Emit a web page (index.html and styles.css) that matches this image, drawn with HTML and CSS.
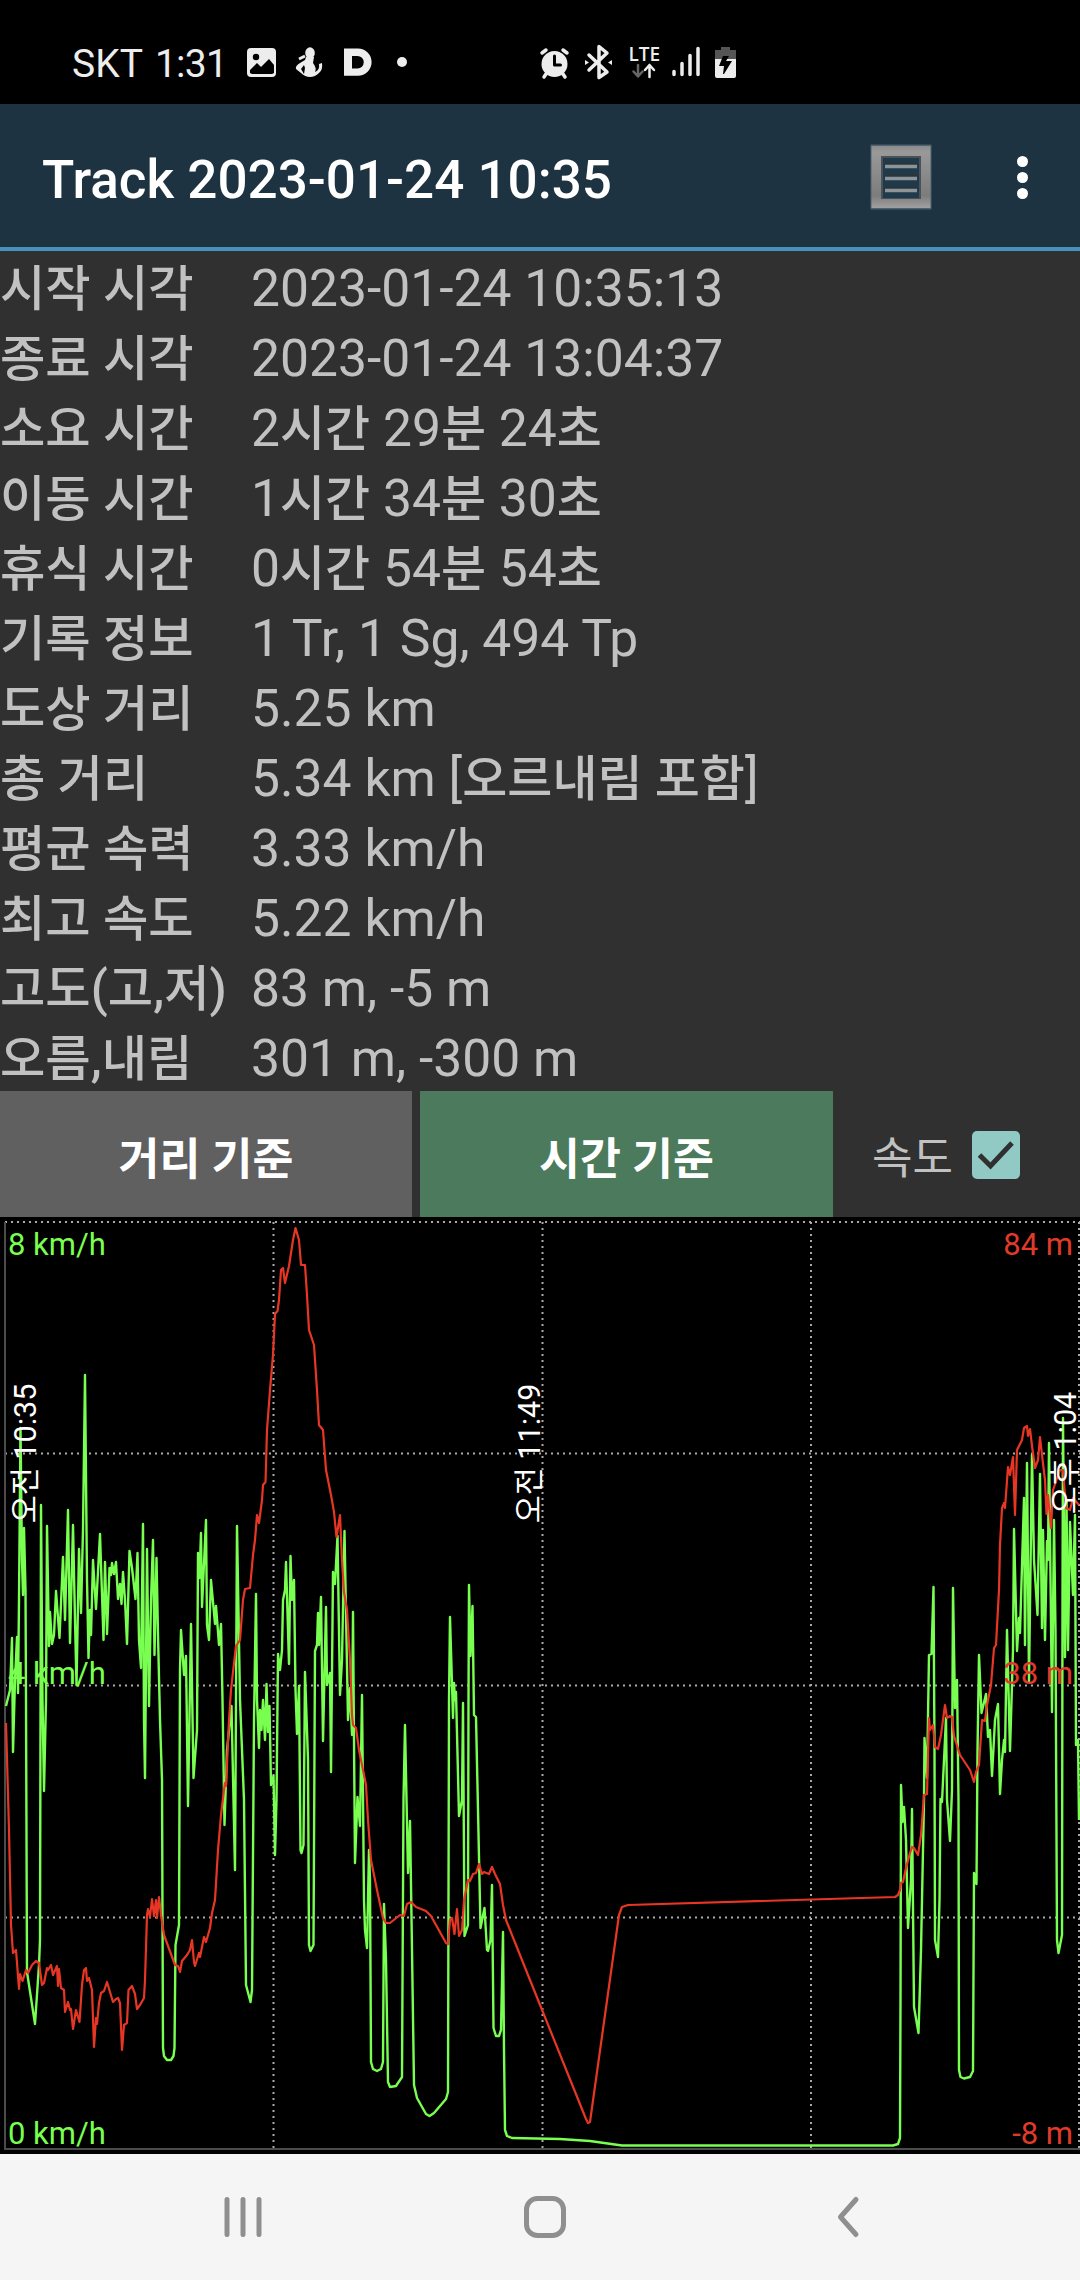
FILE: index.html
```html
<!DOCTYPE html>
<html lang="ko">
<head>
    <meta charset="UTF-8">
    <meta name="viewport" content="width=device-width, initial-scale=1.0">
    <title>Track 2023-01-24 10:35</title>
    <link rel="stylesheet" href="styles.css">
</head>
<body>
    <div class="status">
        <span class="carrier">SKT</span>
        <span class="clock">1:31</span>
        <!-- 알림 아이콘 -->
        <svg class="noti" width="170" height="40" viewBox="240 44 170 40">
            <rect x="247" y="49" width="29" height="29" rx="4"/>
            <circle class="cut" cx="256" cy="58" r="3.2"/>
            <path class="cut" d="M250 71l7-7 4 4 8-8 5 6v8l-2 1h-20l-2-1z"/>
            <ellipse cx="310" cy="54" rx="4.8" ry="5.8"/>
            <path d="M306 58h8l-1 6q4 5 2 9 5-2 4-8l3-1q1 7-3 10-4 4-9 4-5 0-9-4l-5-4q-1-3 4-6l5-3z"/>
            <path class="cut" d="M301 70l3-4 1 3-1 6z"/>
            <path class="arm" d="M299 60l6-3"/>
            <path fill-rule="evenodd" d="M344 49.500h14a13.600 13.600 0 0 1 0 27.200h-14zM352 57v12.500h5.500a6.200 6.200 0 0 0 0-12.500z"/>
            <circle cx="402" cy="63" r="5"/>
        </svg>
        <svg class="system" width="210" height="40" viewBox="535 44 210 40">
            <!-- 알람 -->
            <circle cx="554.500" cy="65" r="13"/>
            <path class="line w4" d="M542 54l4-3M563 51l4 3M546 75l-2 3M563 75l2 3"/>
            <path class="line dark" d="M554.500 57v9h6"/>
            <!-- 블루투스 -->
            <path class="line w4" d="M589 56l18 17-8 5.500v-31l8 6.500-18 17"/>
            <path d="M585 61l4 2.500-4 2.500zM612 61l-4 2.500 4 2.500z"/>
            <!-- LTE -->
            <text class="lte" x="628.500" y="62">LTE</text>
            <path class="line w25 dim" d="M638 66v11M633.500 72.500l4.500 5 4.500-5"/>
            <path class="line w25" d="M649.500 78v-12M645 71l4.500-5 4.500 5"/>
            <!-- 신호 -->
            <path class="line w4" d="M674 72.500v3M682 64.500v11M690 56.500v19M698 49.500v26"/>
            <!-- 배터리 -->
            <path class="gray" d="M721 48h9v3h6v10h-21V51h6z"/>
            <path d="M715 60h21v17q0 2-2 2h-17q-2 0-2-2z"/>
            <path class="cut" d="M723 57l6 0-3 5h6l-8 13-1 0 1-8h-5z"/>
        </svg>
    </div>

    <div class="appbar">
        <h1>Track 2023-01-24 10:35</h1>
        <svg class="list" width="64" height="68" viewBox="869 143 64 68">
            <defs>
                <linearGradient id="metal" x1="0" y1="0" x2="0" y2="1">
                    <stop offset="0" stop-color="#8c8c8c"/>
                    <stop offset=".1" stop-color="#999"/>
                    <stop offset=".8" stop-color="#7c7c7c"/>
                    <stop offset="1" stop-color="#a0a0a0"/>
                </linearGradient>
            </defs>
            <rect x="870.500" y="144.500" width="61" height="65" rx="1" fill="#4d626e"/>
            <rect x="871.500" y="146" width="59" height="62" fill="url(#metal)"/>
            <rect x="881" y="156" width="40" height="43" fill="#4a5258"/>
            <rect x="883" y="158" width="36" height="40" fill="#1e3a4b"/>
            <path d="M885 163.500h32M885 175.500h32M885 187.500h32" stroke="#2c3438" stroke-width="2"/>
            <path d="M885 166.500h32M885 178.500h32M885 190.500h32" stroke="#8c9498" stroke-width="3.500"/>
        </svg>
        <div class="more"><i></i><i></i><i></i></div>
    </div>

    <dl class="info">
        <dt>시작 시각</dt><dd>2023-01-24 10:35:13</dd>
        <dt>종료 시각</dt><dd>2023-01-24 13:04:37</dd>
        <dt>소요 시간</dt><dd>2<b>시간</b> 29<b>분</b> 24<b>초</b></dd>
        <dt>이동 시간</dt><dd>1<b>시간</b> 34<b>분</b> 30<b>초</b></dd>
        <dt>휴식 시간</dt><dd>0<b>시간</b> 54<b>분</b> 54<b>초</b></dd>
        <dt>기록 정보</dt><dd>1 Tr, 1 Sg, 494 Tp</dd>
        <dt>도상 거리</dt><dd>5.25 km</dd>
        <dt>총 거리</dt><dd>5.34 km [<b>오르내림 포함</b>]</dd>
        <dt>평균 속력</dt><dd>3.33 km/h</dd>
        <dt>최고 속도</dt><dd>5.22 km/h</dd>
        <dt>고도(고,저)</dt><dd>83 m, -5 m</dd>
        <dt>오름,내림</dt><dd>301 m, -300 m</dd>
    </dl>

    <div class="tabs">
        <button type="button">거리 기준</button>
        <button type="button" class="on">시간 기준</button>
        <label class="speed">속도
            <svg width="48" height="48" viewBox="0 0 48 48">
                <rect width="48" height="48" rx="5"/>
                <path d="M7.500 24l11 11L40 12"/>
            </svg>
        </label>
    </div>

    <svg class="chart" width="1080" height="937" viewBox="0 1217 1080 937">
        <g class="grid">
            <path d="M5 1222H1080M5 1453.500H1080M5 1685.500H1080M5 1917.500H1080"/>
            <path d="M273.500 1222V2149M542.500 1222V2149M811 1222V2149M1079 1222V2149"/>
        </g>
        <path class="axis" d="M5 1222V2149H1080"/>

        <g class="kmh">
            <text x="8" y="1254.500">8 km/h</text>
            <text x="8" y="1683.500">4 km/h</text>
            <text x="8" y="2143.500">0 km/h</text>
        </g>

        <polyline class="speed-line" points="6,1706 10,1690 12,1638 13,1752 15,1680 17,1637 18,1693 19,1600 20.500,1428 22,1560 23,1595 24,1528 25.500,1590 26,1700 27,1972 35,2024 39,1965 40,1940 41,1505 42.500,1700 44,1791 46,1700 47,1526 49,1646 50,1612 52,1644 54,1635 56,1591 59.500,1638 63,1557 65,1620 68,1510 70,1643 73,1525 75,1620 76.500,1685 79,1549 81,1613 83,1530 85,1375 87,1580 88.500,1658 90,1610 91,1635 93,1560 96,1609 100,1534 103.500,1640 105,1562 107,1634 109.500,1568 111,1575 112,1563 114,1574 116,1562 118,1599 120,1584 121.500,1604 123,1572 125,1600 127,1644 129.500,1551 132,1568 135.500,1599 137.500,1553 139,1640 141,1668 143,1524 144,1720 145,1778 147,1549 149,1706 151,1600 153,1540 154.500,1655 156.500,1558 158,1635 160,1720 162,1780 163,2048 164,2056 167,2060 171,2060 173.500,2056 174.500,2048 175.500,1945 179,1925 180,1670 181,1630 184,1675 186,1656 188,1806 191,1624 193.500,1778 197,1730 198,1553 199.500,1578 201,1533 202,1607 206,1520 207,1625 209,1640 211,1580 215,1624 216,1606 219,1645 221,1624 222.500,1700 224.500,1825 227,1750 231.500,1706 235,1870 237,1526 240,1700 244,1800 246,1985 250.500,2002 252,1990 254,1720 256,1594 257,1700 259,1748 260,1710 261.500,1730 263,1700 265,1740 266.500,1684 268,1732 269.500,1706 271,1785 273.500,1776 275,1855 276.500,1800 278,1654 280,1670 282,1650 283,1600 285,1590 286,1562 289,1664 290.500,1556 292,1600 294,1580 295.500,1690 297,1734 299,1686 300.500,1850 301.500,1853 303.500,1845 305,1672 308,1760 309,1945 310.500,1951 313.500,1945 315,1651 317,1645 318,1613 319,1645 321,1597 323,1741 326,1607 327,1685 330,1673 331,1772 333,1572 335,1584 337.500,1536 340,1695 342,1660 344.500,1531 346.500,1640 348,1720 350,1688 352,1735 353,1612 354,1740 355,1863 357.500,1797 360,1826 362,1695 364,1900 365,1930 367,1948 369,1850 370,1880 371,2062 373,2069 377,2071 381,2069 383,2062 384,1904 386,1960 388,2082 390,2087 396,2086 402,2077 403.500,1800 405,1725 408,1873 410,1821 412,1950 414,2085 417,2098 426,2114 429.500,2116 434,2113 446,2099 448,2092 449,1700 450,1617 453,1718 454,1683 455,1700 456,1692 459,1816 462,1800 463,1703 464.500,1936 468,1925 468.500,1700 469,1585 470.500,1656 472.500,1606 474,1715 476,1717 478,1810 480.500,1928 484.500,1908 487,1950 488,1951 490.500,1940 492,1885 493.500,2028 496,2036 499,2036 501,2030 503,1932 504,2050 505,2130 507,2136 512,2138 560,2139 590,2141 622,2145.500 893,2145.500 898,2144 900,2138 900.500,2000 901,1785 902.500,1822 904,1807 906,1840 908,1928 911,1880 912,1809 914,2007 918.500,2033 921,1950 924,1800 924.500,1738 927,1778 929,1655 931.500,1654 933.500,1587 934.500,1750 935,1940 938,1957 939.500,1900 940.500,1799 942,1802 944,1760 946,1718 947,1800 950,1841 952,1790 953,1588 955,1708 957,1680 958.500,1800 959,2070 960.500,2077 964,2078.500 970,2077 973,2071 974,1873 976.500,1884 977.500,1750 979,1655 981.500,1713 986,1694 988,1737 990,1730 992,1776 995,1720 998,1704 1000,1794 1002,1760 1004,1740 1005,1752 1007,1630 1010,1751 1013,1650 1014,1529 1017,1651 1019,1618 1020,1633 1024,1498 1025,1645 1027,1463 1029,1681 1032,1455 1034,1560 1037.500,1615 1040,1474 1042,1628 1043,1530 1045,1640 1047,1541 1048,1560 1049,1443 1052,1712 1054,1520 1055.500,1630 1057,1940 1058.500,1953 1062,1935 1062.500,1600 1063,1418 1065,1657 1066.500,1500 1068,1650 1070,1522 1073,1595 1075,1515 1076,1745 1078,1740 1079,1820"/>

        <polyline class="alt-line" points="6,1723 9,1830 11,1925 13,1953 16,1950 17,1963 19,1989 20,1974 22.500,1981 26,1970 28,1973 32,1965 36,1961 39,1963 42,1985 44,1983 47,1968 48,1970 51,1965 53,1975 57,1966 58,1986 59,1969 61,1988 64,1990 65,2012 68,2002 70,2010 71,2009 73,2029 76,2010 79.500,2022 82,1985 84,1970 86,1968 87,1981 89,1978 92,1990 94,2047 96,2018 97,2024 99,2003 101,1993 104,1991 107,1982 110,1992 113,2002 116,1999 118,1998 120,2003 122,2050 124,2025 127,2023 128.500,1990 132,1986 135,1994 137,2009 140,2005 144,1998 145,1980 147,1915 148,1909 150,1917 152,1899 154,1916 156,1900 157,1918 159,1897 161,1915 164,1935 175,1965 178,1966 180,1972 182,1961 187,1955 190,1950 192,1940 194,1962 195,1966 199,1953 200,1957 204,1937 206,1942 210,1928 212,1913 215,1900 218,1850 221,1815 224,1790 225,1783 226,1786 229,1720 231,1690 233,1672 236,1646 240,1640 243,1600 245,1589 250,1588 253,1555 255,1540 257,1515 259,1523 262,1500 263,1485 265.500,1482 267,1430 270,1390 273,1355 275,1314 277.500,1311 279,1300 281,1270 283,1268 285,1283 289,1266 293,1240 295.500,1228 299,1240 301,1265 305,1265 307,1295 309,1330 314,1345 317,1390 319,1425 323,1430 326,1470 331,1495 334,1512 336.500,1537 340,1515 342,1560 344,1592 347,1610 350,1660 352,1715 353,1725 356,1728 359,1750 362,1765 366,1785 368,1820 371,1860 377,1890 383,1918 386,1923 390,1923 400,1915 404,1916 407,1904 411,1902 416,1907 426,1911 431,1916 446,1943 448,1944 450,1920 452,1918 454.500,1934 457,1909 459,1936 462,1930 464,1900 468,1880 470,1881 473,1874 476,1873 479,1864 482,1874 484,1872 489,1874 492,1867 495,1874 500,1884 503,1905 506,1920 530,1980 586,2119 588,2123 590,2122 619,1915 622,1907 628,1905 895,1897 898,1895 900,1890 901,1883 903,1882 906,1868 910,1853 912,1847 914,1848 918,1855 921,1835 924,1795 927,1794 929,1718 930,1730 933,1725 935,1747 938,1749 941,1735 945,1705 947,1718 950,1716 952,1717 954,1736 960,1755 970,1770 974,1782 976,1772 979,1765 982,1720 985,1721 987,1705 991,1685 994,1648 996,1645 999,1590 1000,1545 1002,1508 1004,1503 1005,1508 1008,1467 1010,1475 1013,1457 1015,1515 1017,1450 1022,1440 1024,1428 1027,1426 1028,1436 1030,1429 1032,1446 1035,1468 1038,1460 1040,1437 1042,1455 1045,1480 1046.500,1514 1048,1495 1051,1528 1053,1490 1060,1470 1063,1470 1066,1508 1070,1510 1073,1498 1079,1505"/>

        <g class="meter">
            <text x="1073" y="1254.500">84 m</text>
            <text x="1073" y="1683.500">38 m</text>
            <text x="1073" y="2143.500">-8 m</text>
        </g>
        <g class="time">
            <text transform="translate(36 1453.500) rotate(-90)">오전 10:35</text>
            <text transform="translate(540 1453.500) rotate(-90)">오전 11:49</text>
            <text transform="translate(1075.500 1453) rotate(-90)">오후 1:04</text>
        </g>
    </svg>

    <div class="nav">
        <svg width="1080" height="126" viewBox="0 2154 1080 126">
            <path d="M227 2199.500v35M243 2199.500v35M259 2199.500v35"/>
            <rect x="526.500" y="2198.500" width="37" height="37" rx="11"/>
            <path d="M856 2199.500l-15.500 17.500 15.500 17.500"/>
        </svg>
    </div>
</body>
</html>
```
FILE: styles.css
```css
*{
    margin: 0;
    padding: 0;
    box-sizing: border-box;
}
body{
    width: 1080px;
    height: 2280px;
    overflow: hidden;
    background-color: #303030;
    color: #c1c1c1;
    font-family: Roboto, "Noto Sans CJK KR", sans-serif;
    display: flex;
    flex-direction: column;
}
svg{
    display: block;
}

/* 상태바 */
.status{
    height: 104px;
    padding: 22px 0 0 72px;
    background-color: #000;
    color: #ededed;
    font-size: 39px;
    display: flex;
    align-items: center;
}
.status span{
    padding-top: 2px;
}
.status .carrier{
    width: 83px;
}
.status .clock{
    width: 85px;
    letter-spacing: -0.8px;
}
.status svg{
    fill: #ededed;
    overflow: visible;
}
.status .system{
    margin-left: 125px;
}
.status .cut{
    fill: #000;
}
.status .gray{
    fill: #555;
}
.status .arm{
    stroke: #ededed;
    stroke-width: 3;
}
.status .line{
    fill: none;
    stroke: #ededed;
    stroke-width: 3;
    stroke-linecap: round;
    stroke-linejoin: round;
}
.status .w4{
    stroke-width: 3.5;
}
.status .w25{
    stroke-width: 2.5;
}
.status .dark{
    stroke: #000;
}
.status .dim{
    stroke: #666;
}
.status .lte{
    font-family: "Open Sans", sans-serif;
    font-size: 19px;
    font-weight: 600;
}

/* 앱바 */
.appbar{
    height: 147px;
    padding-left: 42px;
    background-color: #1e3342;
    border-bottom: 4px solid #4791bd;
    display: flex;
    align-items: center;
}
.appbar h1{
    width: 827px;
    padding-top: 8px;
    color: #fff;
    font-size: 53px;
    font-weight: 500;
    white-space: nowrap;
}
.appbar .list{
    margin-top: 2px;
}
.more{
    margin: 4px 0 0 84px;
    display: flex;
    flex-direction: column;
    gap: 5px;
}
.more i{
    width: 11px;
    height: 11px;
    border-radius: 50%;
    background-color: #fff;
}

/* 트랙 정보 */
.info{
    height: 840px;
    display: grid;
    grid-template-columns: 251px 1fr;
    grid-auto-rows: 70px;
    font-size: 51.6px;
    line-height: 76px;
    white-space: nowrap;
}
.info dt{
    font-size: 49.3px;
    font-weight: 500;
}
.info b{
    font-size: 49px;
    font-weight: 500;
}

/* 버튼 */
.tabs{
    height: 126px;
    display: flex;
    gap: 8px;
}
.tabs button{
    width: 412px;
    padding-top: 2px;
    border: 0;
    background-color: #606060;
    color: #fff;
    font-family: inherit;
    font-size: 44.5px;
    font-weight: bold;
}
.tabs .on{
    width: 413px;
    background-color: #4b7a5c;
}
.speed{
    padding: 2px 0 0 31px;
    font-size: 44px;
    display: flex;
    align-items: center;
    gap: 19px;
}
.speed rect{
    fill: #91cac5;
}
.speed path{
    fill: none;
    stroke: #303030;
    stroke-width: 5;
}

/* 그래프 */
.chart{
    background-color: #000;
    font-size: 31px;
}
.grid path{
    stroke: #aaa;
    stroke-width: 2;
    stroke-dasharray: 2 4;
}
.axis{
    fill: none;
    stroke: #4b4b4b;
    stroke-width: 2;
}
.kmh{
    fill: #78ff50;
}
.meter{
    fill: #e03a2a;
    text-anchor: end;
}
.time{
    fill: #fff;
    font-size: 30.5px;
    text-anchor: middle;
}
.speed-line, .alt-line{
    fill: none;
    stroke: #78ff50;
    stroke-width: 2.4;
    stroke-linejoin: round;
}
.alt-line{
    stroke: #e83625;
    stroke-width: 2.2;
}

/* 내비게이션 */
.nav{
    height: 126px;
    background-color: #f5f5f5;
}
.nav svg{
    fill: none;
    stroke: #8f8f8f;
    stroke-width: 5;
    stroke-linecap: round;
    stroke-linejoin: round;
}
```
